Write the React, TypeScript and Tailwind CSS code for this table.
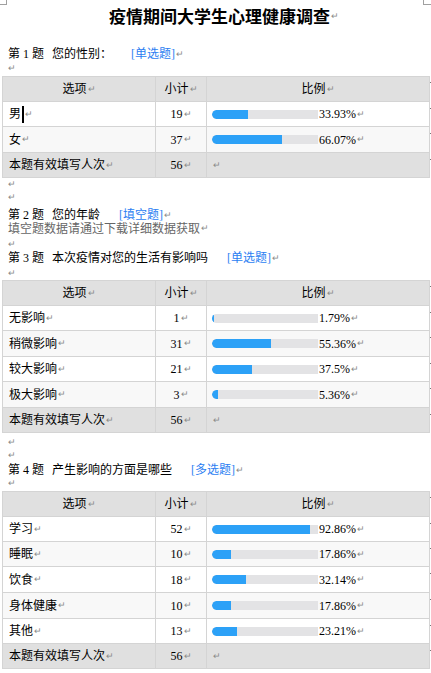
import React from "react";

const FONT = '"Liberation Serif", "Noto Sans CJK SC", serif';

function P() {
  return <span className="text-[9px] text-[#8a8a8a] ml-[1px] leading-none">↵</span>;
}

type Row = { label: string; count: number; pct?: number; pctText?: string };

function Bar({ pct }: { pct: number }) {
  return (
    <div className="w-[106px] h-[9px] bg-[#e3e3e5] rounded-l-full overflow-hidden shrink-0">
      <div className="h-full bg-[#2ca1f7] rounded-l-full" style={{ width: `${pct}%` }} />
    </div>
  );
}

function Mark() {
  return (
    <div className="w-[2px] shrink-0 flex flex-col pt-[6px]">
      <div className="w-[2px] h-[1px] bg-[#777]" />
    </div>
  );
}

function Table({ rows, heights, total }: { rows: Row[]; heights: number[]; total: number }) {
  const cellB = "border-r border-[#d4d4d4] h-full flex items-center";
  return (
    <div className="ml-[2px] flex flex-col">
      {/* header */}
      <div className="flex">
        <div className="w-[428px] border-t border-l border-b border-[#d4d4d4] bg-[#e0e0e0] flex text-[12px] text-black" style={{ height: heights[0] + 1 }}>
          <div className={`w-[153px] justify-center ${cellB}`}>选项<P /></div>
          <div className={`w-[51px] justify-center ${cellB}`}>小计<P /></div>
          <div className={`w-[223px] justify-center ${cellB}`}>比例<P /></div>
        </div>
        <Mark />
      </div>
      {rows.map((r, i) => (
        <div className="flex" key={r.label}>
          <div
            className={`w-[428px] border-l border-b border-[#d4d4d4] flex text-[12px] text-black ${i % 2 === 0 ? "bg-white" : "bg-[#f8f8f8]"}`}
            style={{ height: heights[i + 1] }}
          >
            <div className={`w-[153px] pl-[6px] ${cellB}`}>
              {r.label}
              {i === 0 && r.label === "男" ? <span className="w-[2px] h-[17px] bg-black ml-[1px]" /> : null}
              <P />
            </div>
            <div className={`w-[51px] justify-center ${cellB}`}>{r.count}<P /></div>
            <div className={`w-[223px] pl-[5px] ${cellB}`}>
              <Bar pct={r.pct ?? 0} />
              <span className="ml-[1px]">{r.pctText}</span>
              <P />
            </div>
          </div>
          <Mark />
        </div>
      ))}
      <div className="flex">
        <div
          className="w-[428px] border-l border-b border-[#d4d4d4] bg-[#e0e0e0] flex text-[12px] text-black"
          style={{ height: heights[heights.length - 1] }}
        >
          <div className={`w-[153px] pl-[6px] ${cellB}`}>本题有效填写人次<P /></div>
          <div className={`w-[51px] justify-center ${cellB}`}>{total}<P /></div>
          <div className={`w-[223px] pl-[5px] ${cellB}`}><P /></div>
        </div>
        <Mark />
      </div>
    </div>
  );
}

function QLine({ n, text, tag, gap = 19 }: { n: number; text: string; tag: string; gap?: number }) {
  return (
    <div className="pl-[8px] h-[14px] flex items-center text-[12px] text-black whitespace-pre">
      <span>第 {n} 题</span>
      <span className="ml-[8px]">{text}</span>
      <span className="text-[#2b7ef2]" style={{ marginLeft: gap }}>[{tag}]</span>
      <P />
    </div>
  );
}

function Pil({ h = 13 }: { h?: number }) {
  return (
    <div className="pl-[7px] flex items-center" style={{ height: h }}>
      <P />
    </div>
  );
}

export default function App() {
  return (
    <div className="w-[431px] h-[673px] bg-white overflow-hidden" style={{ fontFamily: FONT }}>
      <div className="relative h-[32px] flex items-center pl-[109px]">
        <div className="absolute left-0 top-0 w-[7px] h-[5px] border-r border-b border-[#a0a0a0]" />
        <div className="absolute left-[423px] top-0 w-[8px] h-[5px] border-l border-b border-[#a0a0a0]" />
        <span className="text-[17px] font-bold text-black tracking-[0px]" style={{ fontFamily: '"Noto Sans CJK SC", sans-serif' }}>
          疫情期间大学生心理健康调查
        </span>
        <P />
      </div>
      <div className="h-[15px]" />
      <QLine n={1} text="您的性别：" tag="单选题" gap={19} />
      <Pil h={14} />
      <div className="h-[1px]" />
      <Table
        heights={[25, 25, 26, 25]}
        total={56}
        rows={[
          { label: "男", count: 19, pct: 33.93, pctText: "33.93%" },
          { label: "女", count: 37, pct: 66.07, pctText: "66.07%" },
        ]}
      />
      <Pil />
      <Pil />
      <div className="h-[4px]" />
      <QLine n={2} text="您的年龄" tag="填空题" />
      <div className="pl-[8px] h-[13px] flex items-center text-[12px] text-[#666]">
        填空题数据请通过下载详细数据获取<P />
      </div>
      <div className="h-[2px]" />
      <Pil h={14} />
      <QLine n={3} text="本次疫情对您的生活有影响吗" tag="单选题" />
      <div className="h-[1px]" />
      <Pil h={14} />
      <Table
        heights={[25, 25, 26, 25, 26, 25]}
        total={56}
        rows={[
          { label: "无影响", count: 1, pct: 1.79, pctText: "1.79%" },
          { label: "稍微影响", count: 31, pct: 55.36, pctText: "55.36%" },
          { label: "较大影响", count: 21, pct: 37.5, pctText: "37.5%" },
          { label: "极大影响", count: 3, pct: 5.36, pctText: "5.36%" },
        ]}
      />
      <div className="h-[3px]" />
      <Pil />
      <Pil />
      <div className="h-[1px]" />
      <QLine n={4} text="产生影响的方面是哪些" tag="多选题" />
      <Pil />
      <div className="h-[1px]" />
      <Table
        heights={[25, 25, 25, 26, 26, 25, 25]}
        total={56}
        rows={[
          { label: "学习", count: 52, pct: 92.86, pctText: "92.86%" },
          { label: "睡眠", count: 10, pct: 17.86, pctText: "17.86%" },
          { label: "饮食", count: 18, pct: 32.14, pctText: "32.14%" },
          { label: "身体健康", count: 10, pct: 17.86, pctText: "17.86%" },
          { label: "其他", count: 13, pct: 23.21, pctText: "23.21%" },
        ]}
      />
    </div>
  );
}
